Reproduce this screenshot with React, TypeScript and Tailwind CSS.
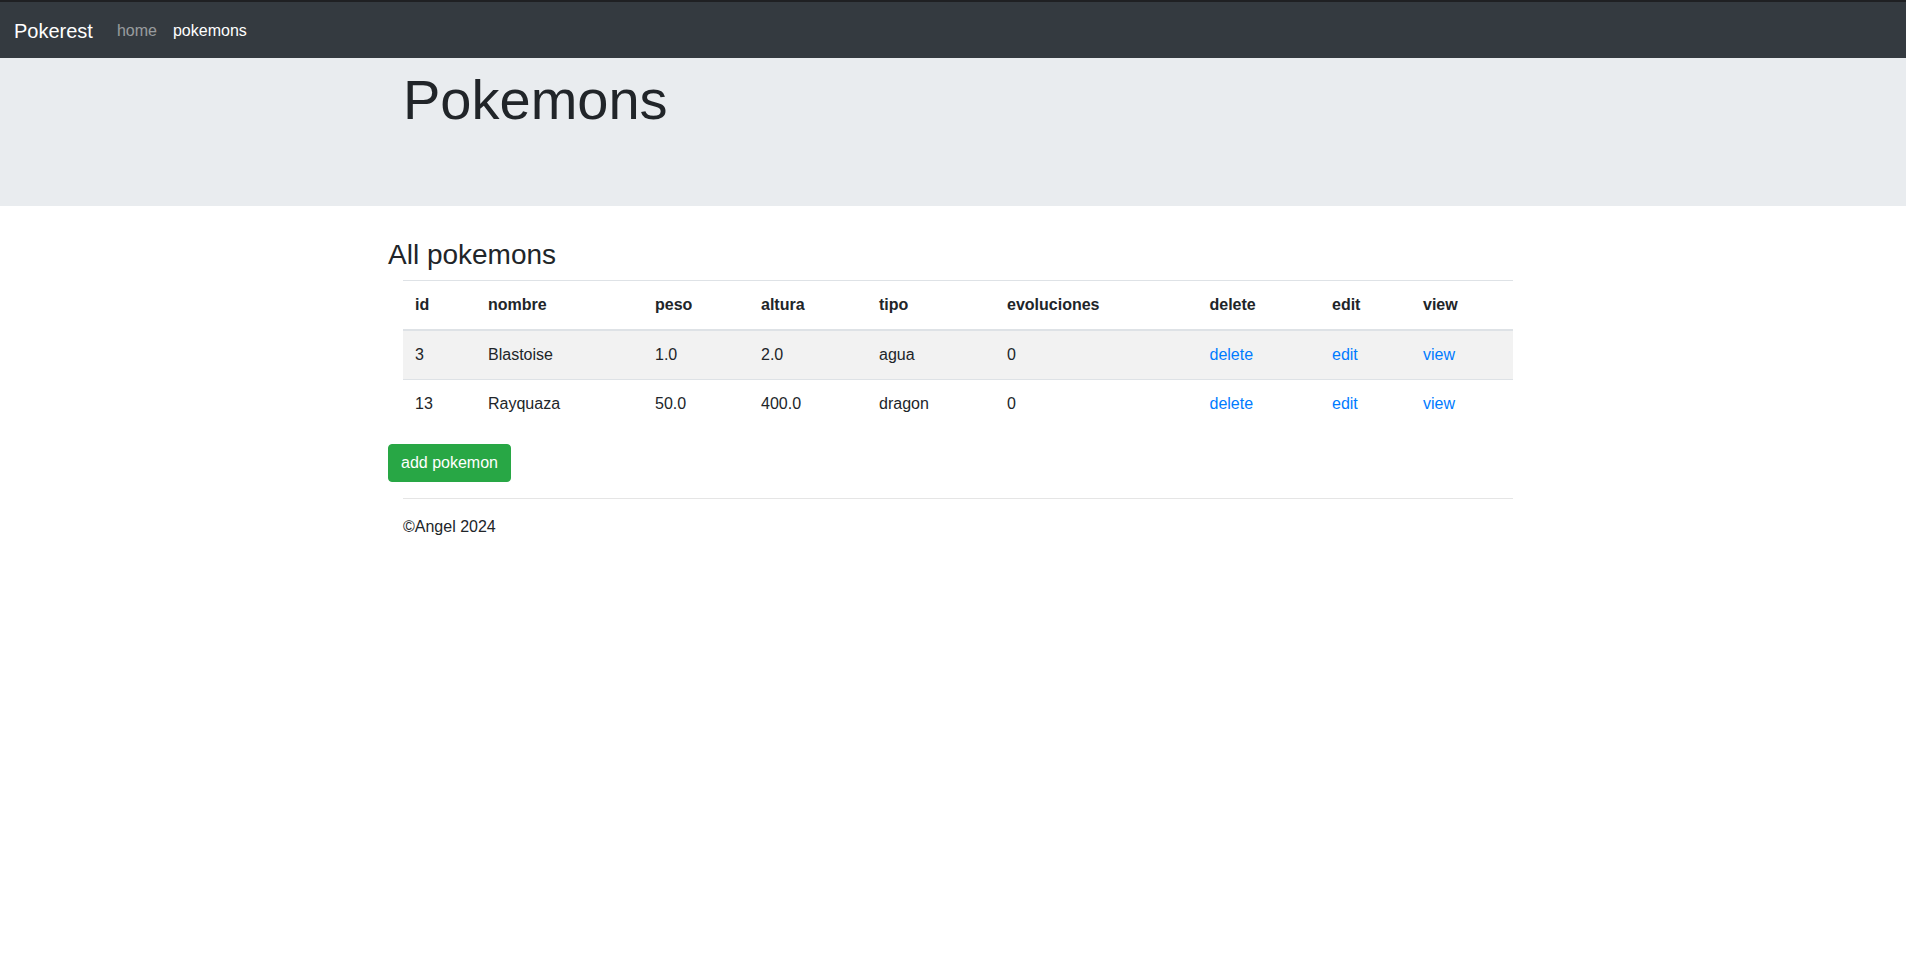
import React from 'react';

type Pokemon = {
  id: number;
  nombre: string;
  peso: string;
  altura: string;
  tipo: string;
  evoluciones: number;
};

const pokemons: Pokemon[] = [
  { id: 3, nombre: 'Blastoise', peso: '1.0', altura: '2.0', tipo: 'agua', evoluciones: 0 },
  { id: 13, nombre: 'Rayquaza', peso: '50.0', altura: '400.0', tipo: 'dragon', evoluciones: 0 },
];

const columns = [
  { label: 'id', width: 'w-[73px]' },
  { label: 'nombre', width: 'w-[167px]' },
  { label: 'peso', width: 'w-[106px]' },
  { label: 'altura', width: 'w-[118px]' },
  { label: 'tipo', width: 'w-[128px]' },
  { label: 'evoluciones', width: 'w-[202.5px]' },
  { label: 'delete', width: 'w-[122.5px]' },
  { label: 'edit', width: 'w-[91px]' },
  { label: 'view', width: 'w-[102px]' },
];

const App: React.FC = () => {
  return (
    <div className="min-h-screen bg-white text-[#212529] text-base leading-6 font-['Liberation_Sans',Arial,sans-serif]">
      {/* Navbar */}
      <div className="h-[2px] bg-[#1f2023]"></div>
      <nav className="h-[56px] bg-[#343a40] pl-[14px] pr-4 pt-[9px] pb-[7px] flex items-center">
        <a href="#" className="text-white text-[20px] leading-[30px] py-[5px] mr-4">
          Pokerest
        </a>
        <ul className="flex">
          <li>
            <a href="#" className="block px-2 py-2 text-white/50">home</a>
          </li>
          <li>
            <a href="#" className="block px-2 py-2 text-white">pokemons</a>
          </li>
        </ul>
      </nav>

      {/* Jumbotron */}
      <div className="bg-[#e9ecef] h-[148px] pt-[8px] mb-8">
        <div className="ml-[388px] w-[1140px] px-[15px]">
          <h1 className="text-[56px] leading-[1.2] font-light">Pokemons</h1>
        </div>
      </div>

      <div className="ml-[388px] w-[1140px] px-[15px]">
        <div className="-mx-[15px]">
          <h2 className="text-[28px] leading-[1.2] mb-2">All pokemons</h2>
        </div>

        <table className="w-full table-fixed border-collapse mb-4">
          <thead>
            <tr>
              {columns.map((c) => (
                <th
                  key={c.label}
                  className={`${c.width} text-left font-bold p-3 border-t border-[#dee2e6] border-b-2 border-b-[#dee2e6]`}
                >
                  {c.label}
                </th>
              ))}
            </tr>
          </thead>
          <tbody>
            {pokemons.map((p, i) => (
              <tr key={p.id} className={i % 2 === 0 ? 'bg-[#f2f2f2]' : ''}>
                <td className="p-3 border-t border-[#dee2e6]">{p.id}</td>
                <td className="p-3 border-t border-[#dee2e6]">{p.nombre}</td>
                <td className="p-3 border-t border-[#dee2e6]">{p.peso}</td>
                <td className="p-3 border-t border-[#dee2e6]">{p.altura}</td>
                <td className="p-3 border-t border-[#dee2e6]">{p.tipo}</td>
                <td className="p-3 border-t border-[#dee2e6]">{p.evoluciones}</td>
                <td className="p-3 border-t border-[#dee2e6]">
                  <a href="#" className="text-[#007bff]">delete</a>
                </td>
                <td className="p-3 border-t border-[#dee2e6]">
                  <a href="#" className="text-[#007bff]">edit</a>
                </td>
                <td className="p-3 border-t border-[#dee2e6]">
                  <a href="#" className="text-[#007bff]">view</a>
                </td>
              </tr>
            ))}
          </tbody>
        </table>

        <div className="-mx-[15px]">
          <button className="bg-[#28a745] border border-[#28a745] text-white rounded px-3 py-1.5 leading-6">
            add pokemon
          </button>
        </div>

        <hr className="mt-4 mb-4 border-0 border-t border-black/10" />
        <footer>
          <p className="mb-4">©Angel 2024</p>
        </footer>
      </div>
    </div>
  );
};

export default App;
